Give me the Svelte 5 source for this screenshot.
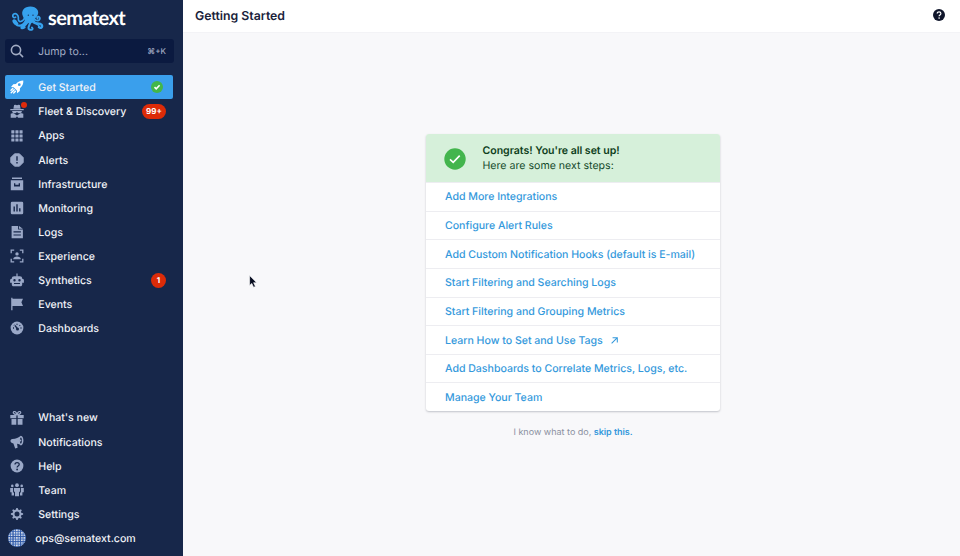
<script>
  const mainNav = [
    { label: 'Get Started', icon: 'rocket', active: true },
    { label: 'Fleet & Discovery', icon: 'agent', badge: '99+', dot: true },
    { label: 'Apps', icon: 'grid' },
    { label: 'Alerts', icon: 'alert' },
    { label: 'Infrastructure', icon: 'box' },
    { label: 'Monitoring', icon: 'chart' },
    { label: 'Logs', icon: 'doc' },
    { label: 'Experience', icon: 'experience' },
    { label: 'Synthetics', icon: 'robot', badge: '1' },
    { label: 'Events', icon: 'flag' },
    { label: 'Dashboards', icon: 'gauge' },
  ];
  const footNav = [
    { label: "What's new", icon: 'gift' },
    { label: 'Notifications', icon: 'horn' },
    { label: 'Help', icon: 'help' },
    { label: 'Team', icon: 'team' },
    { label: 'Settings', icon: 'gear' },
  ];
  const steps = [
    { label: 'Add More Integrations' },
    { label: 'Configure Alert Rules' },
    { label: 'Add Custom Notification Hooks (default is E-mail)' },
    { label: 'Start Filtering and Searching Logs' },
    { label: 'Start Filtering and Grouping Metrics' },
    { label: 'Learn How to Set and Use Tags', external: true },
    { label: 'Add Dashboards to Correlate Metrics, Logs, etc.' },
    { label: 'Manage Your Team' },
  ];
</script>

{#snippet icon(name)}
  <svg class="icon" viewBox="0 0 14 14" fill="currentColor">
    {#if name === 'rocket'}
      <path fill-rule="evenodd" d="M13.3.6C10.2.6 7.7 1.8 5.900 4.100L3.300 4.300 1 7l2.600.2 3.300 3.200.2 2.800 2.700-2.300.2-2.600C12.500 6.300 13.500 3.700 13.300.600zM9.300 3.300a1.400 1.400 0 1 1 0 2.800 1.400 1.400 0 0 1 0-2.800z" />
      <path d="M2.800 8.600 1 10.300M4.200 9.800 1.200 12.800M5.400 11.200 3.700 13" stroke="currentColor" stroke-width="1.400" stroke-linecap="round" fill="none" />
    {:else if name === 'agent'}
      <path d="M3.400 4.700 4.100 1Q5.500.3 7 1.200 8.500.3 9.900 1l.7 3.700zM.3 5h13.400v1.300H.3zM2.200 7h9.600v.8c0 1.500-3.600 1.900-4.300.4h-1c-.7 1.500-4.300 1.100-4.300-.4z" />
      <path d="M.7 13.800V9.800l2.500-.7 3.800 2.300 3.800-2.300 2.500.7v4H8.200L7 12.300l-1.200 1.500z" />
    {:else if name === 'grid'}
      {#each [1.3, 5.4, 9.5] as x}
        {#each [1.3, 5.4, 9.5] as y}
          <rect {x} {y} width="3.100" height="3.100" rx=".3" />
        {/each}
      {/each}
    {:else if name === 'alert'}
      <path d="M4.600.7h4.800l3.900 3.900v4.800l-3.900 3.900H4.600L.7 9.400V4.600z" stroke="currentColor" stroke-width=".8" stroke-linejoin="round" />
      <path class="cut" d="M6.300 3.300h1.400v4.500H6.300zM6.300 9h1.400v1.500H6.300z" />
    {:else if name === 'box'}
      <path fill-rule="evenodd" d="M2 .6h10v1.300H2zM.8 3.200h12.400v10H.8zM4 6.200v3.300h6V6.200H8.700v1.500H5.300V6.200z" />
    {:else if name === 'chart'}
      <rect x=".8" y=".8" width="12.400" height="12.400" rx="1.300" />
      <path class="cut" d="M3.500 5.500h1.400v5H3.500zM6.300 3.300h1.400v7.200H6.300zM9.100 7.200h1.400v3.300H9.100z" />
    {:else if name === 'doc'}
      <path fill-rule="evenodd" d="M2.400 1h5.700v3.500h4.800v8.700H1.600V1zM3.500 6.300v1.100h7.400V6.300zM3.500 9.500v1.100h7.400V9.500z" />
      <path d="M9 .9 12.800 3.700H9z" />
    {:else if name === 'experience'}
      <path d="M1.200 4.200V1.200h3M9.800 1.200h3v3M12.800 9.800v3h-3M4.200 12.800h-3v-3" fill="none" stroke="currentColor" stroke-width="1.300" />
      <circle cx="7" cy="4.900" r="1.700" /><path d="M3.200 10.200c0-3.500 7.600-3.500 7.600 0z" />
    {:else if name === 'robot'}
      <path fill-rule="evenodd" d="M6.400 3.200V.6h1.200v2.600h2.200c1.700 0 2.300.8 2.500 2.500l1.600.8v3.300h-1.700v1.700c0 1.200-.7 1.800-1.800 1.800H3.600c-1.100 0-1.800-.6-1.800-1.800V9.800H.1V6.500l1.600-.8c.2-1.700.8-2.500 2.500-2.500zM4.500 6a1.200 1.200 0 1 0 0 2.400 1.200 1.200 0 0 0 0-2.400zM9.500 6a1.200 1.200 0 1 0 0 2.400 1.200 1.200 0 0 0 0-2.400zM4 10v1.100h6V10z" />
    {:else if name === 'flag'}
      <path d="M1.200.8h1.300v12.500H1.200zM2.400 1.700H13l-1.600 3.600L13 9H2.400z" />
    {:else if name === 'gauge'}
      <circle cx="7" cy="7" r="6.400" />
      <path class="cut-line" d="m5 4.500 2.700 3.600M3 7h1M10.500 7h1M7 2.800v1M10.200 4.200l-.7.700M4 3.900l.4.400" />
      <circle class="cut" cx="7.500" cy="8" r="1.500" />
    {:else if name === 'gift'}
      <path d="M.3 3.900h6v3.300h-6zM7.700 3.900h6v3.300h-6zM1.500 8h4.800v5.700H1.500zM7.700 8h4.800v5.700H7.700z" />
      <path d="M6.800 3.600C2.500 3.600 2.700.5 4.400.5c1.300 0 2.200 1.600 2.600 3 .4-1.400 1.300-3 2.600-3 1.700 0 1.900 3.100-2.400 3.100" fill="none" stroke="currentColor" stroke-width="1.200" />
    {:else if name === 'horn'}
      <path fill-rule="evenodd" d="M10.800.8c3.500 0 3.500 9.600 0 9.600-1-.8-2.200-1.500-3.700-1.700l.5 4-2.400.8-1.800-5C-.3 8.300-.3 4 2.300 3.900c3.800 0 6.300-1.100 8.500-3.100zm0 1.600c-1.200 1-1.200 5.300 0 6.400 1.500-.3 1.500-6.100 0-6.400z" />
      <circle cx="10.400" cy="5.600" r="1" />
    {:else if name === 'help'}
      <circle cx="7" cy="7" r="6.400" />
      <path class="cut-line" d="M5 5.600c0-2.600 4.200-2.500 4.200-.2C9.200 7 7.100 6.900 7.100 8.500" />
      <circle class="cut" cx="7.100" cy="10.500" r=".9" />
    {:else if name === 'team'}
      <circle cx="7" cy="2.200" r="1.900" /><circle cx="2.300" cy="2.900" r="1.300" /><circle cx="11.700" cy="2.900" r="1.300" />
      <path d="M4 5h6v3.800H9v4.500H5V8.800H4zM.2 5h2.900v4.500h.9v3H1.600V9.200H.2zM13.800 5h-2.900v4.500H10v3h2.400V9.200h1.400z" />
    {:else if name === 'gear'}
      <circle cx="7" cy="7" r="3.500" fill="none" stroke="currentColor" stroke-width="2" />
      {#each [0, 45, 90, 135, 180, 225, 270, 315] as angle}
        <path d="M5.700 3.200h2.600L7.700.9H6.300z" transform="rotate({angle} 7 7)" />
      {/each}
    {/if}
  </svg>
{/snippet}

<div class="app">
  <aside>
    <div class="brand">
      <svg class="octopus" viewBox="0 0 96 74" fill="none" stroke="#36a2ee" stroke-linecap="round" stroke-linejoin="round">
        <path d="M33 31C25 13 38 1 55 1c19 0 29 14 21 28-3 6-9 7-8 15L54 54 39 43z" fill="#36a2ee" stroke="none" />
        <path d="M39 33C31 51 18 49 19 36c1-10-8-17-14-12-6 6 0 13 6 9" stroke-width="5" />
        <path d="M43 39C37 60 20 63 10 53c-8-7-7-12-2-10 4 2 5 6 8 9" stroke-width="6.500" />
        <path d="M49 42C43 54 35 60 31 62c-5 3 0 5 6 1" stroke-width="8" />
        <path d="M54 43c4 11-11 22-2 27 8 3 12-1 8-6" stroke-width="6" />
        <path d="M61 41c1 16 21 7 28 15 4 7-3 12-8 7" stroke-width="7" />
        <path d="M67 38c8 11 20 3 16-4-4-5-11 0-6 3M66 45c7 14 15 7 15 17" stroke-width="5" />
        <circle cx="49" cy="27" r="2" fill="#17274a" stroke="none" /><circle cx="63" cy="27" r="2" fill="#17274a" stroke="none" />
      </svg>
      <span class="wordmark">sematext</span>
    </div>

    <div class="search">
      <svg class="magnifier" viewBox="0 0 14 14" fill="none" stroke="currentColor" stroke-width="1.600" stroke-linecap="round"><circle cx="6" cy="6" r="4.600" /><path d="m9.500 9.500 3.100 3.100" /></svg>
      <span>Jump to...</span>
      <kbd>⌘+K</kbd>
    </div>

    <nav>
      {#each mainNav as item}
        <a class="item" class:active={item.active} href="#top">
          <span class="slot">{@render icon(item.icon)}{#if item.dot}<i class="dot"></i>{/if}</span>
          <span class="label">{item.label}</span>
          {#if item.active}
            <svg class="done" viewBox="0 0 12 12"><circle cx="6" cy="6" r="6" fill="#43b649" /><path d="m3.500 6.200 1.700 1.600L8.600 4.300" fill="none" stroke="#fff" stroke-width="1.600" /></svg>
          {:else if item.badge}
            <span class="badge" class:round={item.badge.length === 1}>{item.badge}</span>
          {/if}
        </a>
      {/each}
    </nav>

    <nav class="foot">
      {#each footNav as item}
        <a class="item" href="#top">
          <span class="slot">{@render icon(item.icon)}</span>
          <span class="label">{item.label}</span>
        </a>
      {/each}
      <a class="item user" href="#top">
        <svg class="avatar" viewBox="0 0 18 18">
          <defs><clipPath id="disc"><circle cx="9" cy="9" r="9" /></clipPath></defs>
          <g clip-path="url(#disc)">
            <rect width="18" height="18" fill="#3e6ab8" />
            {#each [0.5, 3, 5.5, 8, 10.5, 13, 15.5] as x, i}
              {#each [0.5, 3, 5.5, 8, 10.5, 13, 15.5] as y, j}
                <rect {x} {y} width="1.700" height="1.700" fill={(i + j) % 3 ? '#bccae3' : '#e0e2e8'} />
              {/each}
            {/each}
            <path d="M5 0v18M12.600 0v18M0 7.600h18M0 12.700h18" stroke="#2d55a2" stroke-width=".8" />
          </g>
        </svg>
        <span class="label">ops@sematext.com</span>
      </a>
    </nav>
  </aside>

  <main>
    <header>
      <h1>Getting Started</h1>
      <svg class="header-help" viewBox="0 0 12 12"><circle cx="6" cy="6" r="6" fill="#10162b" /><path d="M4.200 4.600c0-2.400 3.700-2.300 3.700-.1 0 1.500-1.800 1.400-1.800 2.800" fill="none" stroke="#fff" stroke-width="1.200" /><circle cx="6.100" cy="9.100" r=".8" fill="#fff" /></svg>
    </header>

    <section>
      <div class="card">
        <div class="congrats">
          <svg class="check" viewBox="0 0 22 22"><circle cx="11" cy="11" r="10.700" fill="#43b54d" /><path d="m6 11.400 3.200 3 6.500-6.800" fill="none" stroke="#fff" stroke-width="1.600" /></svg>
          <div>
            <strong>Congrats! You're all set up!</strong>
            <p>Here are some next steps:</p>
          </div>
        </div>
        <ul>
          {#each steps as step}
            <li>
              <a href="#top">{step.label}</a>
              {#if step.external}
                <svg class="external" viewBox="0 0 8 8" fill="none" stroke="currentColor" stroke-width="1.200"><path d="M.7 7.300 7 1M1.800.8h5.400v5.400" /></svg>
              {/if}
            </li>
          {/each}
        </ul>
      </div>
      <p class="skip">I know what to do, <a href="#top">skip this.</a></p>
    </section>
  </main>

  <svg class="pointer" viewBox="0 0 8 13"><path d="M.6.6v9.800l2.200-2 1.800 3.900 1.800-.9-1.800-3.700h3z" fill="#070d20" stroke="#fff" stroke-width=".6" /></svg>
</div>

<style>
  :global(body) { margin: 0; }
  * { box-sizing: border-box; }
  a { color: inherit; text-decoration: none; }
  svg { display: block; flex: none; }
  .app {
    position: relative;
    display: flex;
    width: 960px;
    height: 556px;
    overflow: hidden;
    font-family: Inter, "Liberation Sans", sans-serif;
    text-rendering: geometricPrecision;
    background: #f8f8fa;
  }

  aside {
    display: flex;
    flex-direction: column;
    width: 183px;
    flex: none;
    padding: 5px 10px 5.900px 5px;
    background: #17274a;
    color: #f0f2f7;
  }
  .brand { display: flex; height: 34px; padding-left: 7px; }
  .octopus { width: 32px; height: 25px; margin-top: 1px; }
  .wordmark {
    margin-left: 4px;
    font: 700 20px/27px Lato, sans-serif;
    letter-spacing: -.6px;
    color: #fff;
  }
  .search {
    display: flex;
    align-items: center;
    height: 24px;
    margin-right: -1px;
    padding: 0 8px 0 5px;
    border-radius: 3px;
    background: #0b1a40;
    color: #a1abc3;
    font-size: 10.600px;
  }
  .magnifier { width: 14px; height: 14px; margin-right: 14px; }
  kbd { margin-left: auto; font: 500 8px Inter, "DejaVu Sans", sans-serif; }

  nav { margin-top: 12.300px; }
  .foot { margin-top: auto; }
  .item {
    display: flex;
    align-items: center;
    height: 24.100px;
    padding: 0 7px 0 5px;
    border-radius: 2px;
    font-size: 10.600px;
    font-weight: 500;
    white-space: nowrap;
  }
  .label { padding-top: .8px; letter-spacing: -.02px; }
  .active { background: #3a9fec; }
  .slot { position: relative; width: 14px; margin-right: 14.300px; color: #9aa8c7; }
  .active .slot { color: #fff; }
  .icon { width: 14px; height: 14px; }
  .icon .cut { fill: #17274a; }
  .icon .cut-line { fill: none; stroke: #17274a; stroke-width: 1.300; }
  .dot {
    position: absolute;
    top: -2px;
    right: -3px;
    width: 6px;
    height: 6px;
    border-radius: 50%;
    background: #df2b0b;
  }
  .done { width: 12px; height: 12px; margin-left: auto; margin-right: 3.500px; }
  .badge {
    margin-left: auto;
    width: 24px;
    height: 15px;
    border-radius: 8px;
    background: #dc2b08;
    color: #fff;
    text-align: center;
    font: 700 8px/15px Inter, sans-serif;
  }
  .badge.round { width: 15px; }
  .avatar { width: 18px; height: 18px; margin: 0 9.300px 0 -2px; }

  main { display: flex; flex-direction: column; flex: 1; }
  header {
    display: flex;
    justify-content: space-between;
    height: 33px;
    padding: 9px 15px 0 12px;
    border-bottom: 1px solid #f3f3f6;
    background: #fff;
  }
  h1 { margin: -1px 0 0; font-size: 12.300px; line-height: 15px; font-weight: 600; color: #1a223b; }
  .header-help { width: 12px; height: 12px; }

  section { display: flex; flex-direction: column; align-items: center; padding: 101px 0 0 3px; }
  .card {
    width: 294px;
    height: 277px;
    border-radius: 3px;
    background: #fff;
    box-shadow: 0 1px 2px rgba(30, 40, 60, .25);
    overflow: hidden;
  }
  .congrats {
    display: flex;
    height: 48px;
    padding: 9px 18px 0;
    background: #d6f0da;
    color: #154b2c;
    font-size: 10.600px;
    line-height: 15px;
  }
  .check { width: 22px; height: 22px; margin: 5px 16.500px 0 0; }
  .congrats strong { font-weight: 600; color: #0e4020; letter-spacing: -.04px; }
  .congrats p { margin: 0; }
  ul { margin: 0; padding: 0; list-style: none; }
  li {
    display: flex;
    align-items: center;
    height: 28.650px;
    padding-left: 19px;
    border-top: 1px solid #ededf1;
    color: #3499dc;
    font-size: 10.600px;
    font-weight: 500;
    letter-spacing: -.025px;
    white-space: nowrap;
  }
  .external { width: 7px; height: 7px; margin-left: 8px; }
  .skip { margin: 14px 0 0; font-size: 9px; line-height: 15px; color: #8b91a1; }
  .skip a { color: #3499dc; font-weight: 600; letter-spacing: -.05px; }

  .pointer { position: absolute; left: 249px; top: 275px; width: 8px; height: 13px; }
</style>
